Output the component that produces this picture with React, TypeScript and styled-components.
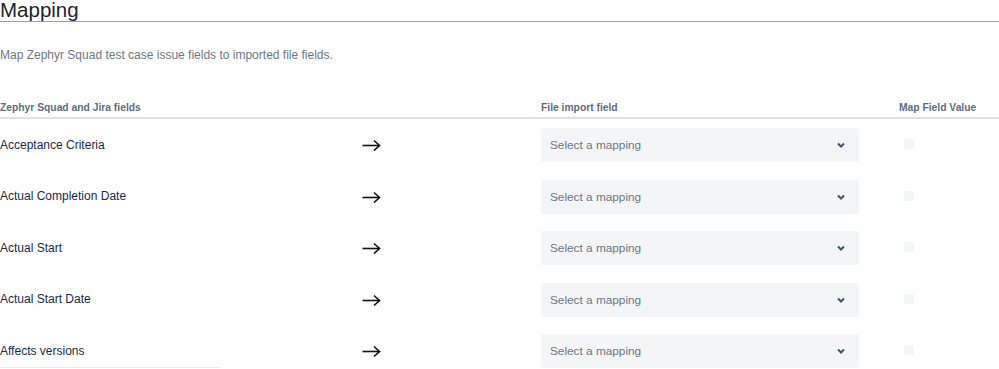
import React from "react";
import styled, { createGlobalStyle } from "styled-components";

const GlobalStyle = createGlobalStyle`
  html, body {
    margin: 0;
    padding: 0;
    background: #ffffff;
    font-family: "Liberation Sans", Arial, sans-serif;
  }
`;

const FIELDS = [
  "Acceptance Criteria",
  "Actual Completion Date",
  "Actual Start",
  "Actual Start Date",
  "Affects versions",
];

const Page = styled.div`
  width: 999px;
  overflow: hidden;
`;

const Title = styled.h1`
  margin: 0;
  padding: 1px 0 3px;
  font-size: 20.5px;
  font-weight: 400;
  line-height: 17px;
  color: #1d2430;
  border-bottom: 1px solid #a0a0a0;
`;

const Description = styled.p`
  margin: 24px 0 0;
  font-size: 12px;
  line-height: 18px;
  color: #6b778c;
`;

const Table = styled.div`
  margin-top: 36px;
  display: grid;
  grid-template-columns: 355px 186px 358px 1fr;
`;

const HeaderCell = styled.div`
  padding: 0 0 1px;
  font-size: 10.3px;
  font-weight: 700;
  line-height: 16px;
  color: #5e6c84;
  border-bottom: 2px solid #dfe1e6;
  white-space: nowrap;
`;

const Cell = styled.div<{ $first?: boolean }>`
  display: flex;
  align-items: center;
  padding: ${(p) => (p.$first ? "9px" : "8.75px")} 0 8.75px;
`;

const Label = styled.div<{ $underline?: boolean }>`
  width: 220px;
  height: 34px;
  box-sizing: border-box;
  display: flex;
  align-items: center;
  font-size: 12px;
  color: #172b4d;
  border-bottom: 1px solid ${(p) => (p.$underline ? "#ebecf0" : "transparent")};
`;

const ArrowCell = styled(Cell)`
  padding-left: 7px;
`;

const Select = styled.div`
  width: 318px;
  height: 34px;
  box-sizing: border-box;
  padding: 0 14px 0 9px;
  display: flex;
  align-items: center;
  justify-content: space-between;
  background: #f4f5f7;
  border-radius: 3px;
  font-size: 11.8px;
  color: #6b778c;
`;

const CheckCell = styled(Cell)`
  padding-left: 5px;
`;

const Checkbox = styled.div`
  width: 10px;
  height: 10px;
  border-radius: 2px;
  background: #f4f5f7;
  margin-top: -2px;
`;

const Arrow = () => (
  <svg width="19" height="12" viewBox="0 0 19 12" fill="none">
    <path d="M0.5 6.5H17.5" stroke="#111" strokeWidth="1.6" />
    <path d="M12 1.5L17.5 6.5L12 11.5" stroke="#111" strokeWidth="1.6" />
  </svg>
);

const Chevron = () => (
  <svg width="8" height="6" viewBox="0 0 8 6" fill="none">
    <path d="M1 1.5L4 4.5L7 1.5" stroke="#42526e" strokeWidth="2" />
  </svg>
);

export default function App() {
  return (
    <Page>
      <GlobalStyle />
      <Title>Mapping</Title>
      <Description>Map Zephyr Squad test case issue fields to imported file fields.</Description>
      <Table>
        <HeaderCell>Zephyr Squad and Jira fields</HeaderCell>
        <HeaderCell />
        <HeaderCell>File import field</HeaderCell>
        <HeaderCell>Map Field Value</HeaderCell>
        {FIELDS.map((name, i) => (
          <React.Fragment key={name}>
            <Cell $first={i === 0}>
              <Label $underline={i === FIELDS.length - 1}>{name}</Label>
            </Cell>
            <ArrowCell $first={i === 0}>
              <Arrow />
            </ArrowCell>
            <Cell $first={i === 0}>
              <Select>
                <span>Select a mapping</span>
                <Chevron />
              </Select>
            </Cell>
            <CheckCell $first={i === 0}>
              <Checkbox />
            </CheckCell>
          </React.Fragment>
        ))}
      </Table>
    </Page>
  );
}
